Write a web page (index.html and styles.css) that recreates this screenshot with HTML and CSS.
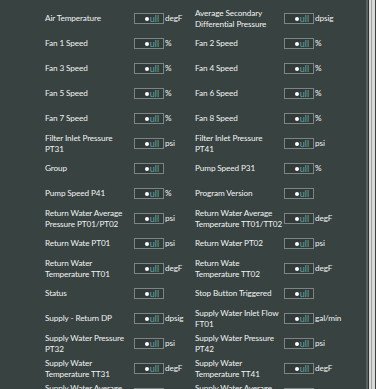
FILE: index.html
```html
<!DOCTYPE html>
<html lang="en">
<head>
    <meta charset="UTF-8">
    <meta name="viewport" content="width=device-width, initial-scale=1.0">
    <title>Tags</title>
    <link rel="stylesheet" href="styles.css">
</head>
<body>
    <div class="app">
        <div class="panel">
            <div class="grid">
                <div class="tag"><span class="label">Air Temperature</span><span class="box"><i class="dot"></i>ull</span><span class="unit">degF</span></div>
                <div class="tag"><span class="label">Average Secondary<br>Differential Pressure</span><span class="box"><i class="dot"></i>ull</span><span class="unit">dpsig</span></div>

                <div class="tag"><span class="label">Fan 1 Speed</span><span class="box"><i class="dot"></i>ull</span><span class="unit">%</span></div>
                <div class="tag"><span class="label">Fan 2 Speed</span><span class="box"><i class="dot"></i>ull</span><span class="unit">%</span></div>

                <div class="tag"><span class="label">Fan 3 Speed</span><span class="box"><i class="dot"></i>ull</span><span class="unit">%</span></div>
                <div class="tag"><span class="label">Fan 4 Speed</span><span class="box"><i class="dot"></i>ull</span><span class="unit">%</span></div>

                <div class="tag"><span class="label">Fan 5 Speed</span><span class="box"><i class="dot"></i>ull</span><span class="unit">%</span></div>
                <div class="tag"><span class="label">Fan 6 Speed</span><span class="box"><i class="dot"></i>ull</span><span class="unit">%</span></div>

                <div class="tag"><span class="label">Fan 7 Speed</span><span class="box"><i class="dot"></i>ull</span><span class="unit">%</span></div>
                <div class="tag"><span class="label">Fan 8 Speed</span><span class="box"><i class="dot"></i>ull</span><span class="unit">%</span></div>

                <div class="tag"><span class="label">Filter Inlet Pressure<br>PT31</span><span class="box"><i class="dot"></i>ull</span><span class="unit">psi</span></div>
                <div class="tag"><span class="label">Filter Inlet Pressure<br>PT41</span><span class="box"><i class="dot"></i>ull</span><span class="unit">psi</span></div>

                <div class="tag"><span class="label">Group</span><span class="box"><i class="dot"></i>ull</span><span class="unit"></span></div>
                <div class="tag"><span class="label">Pump Speed P31</span><span class="box"><i class="dot"></i>ull</span><span class="unit">%</span></div>

                <div class="tag"><span class="label">Pump Speed P41</span><span class="box"><i class="dot"></i>ull</span><span class="unit">%</span></div>
                <div class="tag"><span class="label">Program Version</span><span class="box"><i class="dot"></i>ull</span><span class="unit"></span></div>

                <div class="tag"><span class="label">Return Water Average<br>Pressure PT01/PT02</span><span class="box"><i class="dot"></i>ull</span><span class="unit">psi</span></div>
                <div class="tag"><span class="label">Return Water Average<br>Temperature TT01/TT02</span><span class="box"><i class="dot"></i>ull</span><span class="unit">degF</span></div>

                <div class="tag"><span class="label">Return Wate PT01</span><span class="box"><i class="dot"></i>ull</span><span class="unit">psi</span></div>
                <div class="tag"><span class="label">Return Water PT02</span><span class="box"><i class="dot"></i>ull</span><span class="unit">psi</span></div>

                <div class="tag"><span class="label">Return Water<br>Temperature TT01</span><span class="box"><i class="dot"></i>ull</span><span class="unit">degF</span></div>
                <div class="tag"><span class="label">Return Wate<br>Temperature TT02</span><span class="box"><i class="dot"></i>ull</span><span class="unit">degF</span></div>

                <div class="tag"><span class="label">Status</span><span class="box"><i class="dot"></i>ull</span><span class="unit"></span></div>
                <div class="tag"><span class="label">Stop Button Triggered</span><span class="box"><i class="dot"></i>ull</span><span class="unit"></span></div>

                <div class="tag"><span class="label">Supply - Return DP</span><span class="box"><i class="dot"></i>ull</span><span class="unit">dpsig</span></div>
                <div class="tag"><span class="label">Supply Water Inlet Flow<br>FT01</span><span class="box"><i class="dot"></i>ull</span><span class="unit">gal/min</span></div>

                <div class="tag"><span class="label">Supply Water Pressure<br>PT32</span><span class="box"><i class="dot"></i>ull</span><span class="unit">psi</span></div>
                <div class="tag"><span class="label">Supply Water Pressure<br>PT42</span><span class="box"><i class="dot"></i>ull</span><span class="unit">psi</span></div>

                <div class="tag"><span class="label">Supply Water<br>Temperature TT31</span><span class="box"><i class="dot"></i>ull</span><span class="unit">degF</span></div>
                <div class="tag"><span class="label">Supply Water<br>Temperature TT41</span><span class="box"><i class="dot"></i>ull</span><span class="unit">degF</span></div>

                <div class="tag"><span class="label">Supply Water Average<br>Pressure PT32/PT42</span><span class="box"><i class="dot"></i>ull</span><span class="unit">psi</span></div>
                <div class="tag"><span class="label">Supply Water Average<br>Temperature TT31/TT41</span><span class="box"><i class="dot"></i>ull</span><span class="unit">degF</span></div>
            </div>
        </div>
        <div class="scrollbar"></div>
    </div>
</body>
</html>
```

FILE: styles.css
```css
body {
    margin: 0;
    padding: 0;
    background-color: #374241;
    font-family: Lato, "Open Sans", Arial, sans-serif;
    color: #f2f2f2;
    overflow: hidden;
}
.app {
    display: flex;
    height: 389px;
}
.panel {
    width: 368px;
    border-right: 2px solid #59625f;
    box-sizing: border-box;
    overflow: hidden;
}
.scrollbar {
    width: 6px;
    border-left: 1px solid #2b3332;
    background: linear-gradient(to right, #d8d8d8 0, #d8d8d8 2px, #a2a2a2 2px, #a2a2a2 3px, #d8d8d8 3px);
}
.grid {
    display: grid;
    grid-template-columns: 150px 150px;
    grid-auto-rows: 25px;
    padding: 6px 0 0 45px;
}
.tag {
    display: flex;
    align-items: center;
    font-size: 8.2px;
    letter-spacing: -0.1px;
    line-height: 10.5px;
}
.label {
    width: 89px;
    flex-shrink: 0;
    white-space: nowrap;
}
.box {
    width: 30px;
    height: 11px;
    flex-shrink: 0;
    box-sizing: border-box;
    border: 1px solid #7c8583;
    background-color: #323b3a;
    display: flex;
    align-items: center;
    justify-content: flex-end;
    padding-right: 4px;
    color: #5fa8a0;
    font-size: 9px;
    letter-spacing: 0;
    line-height: 9px;
}
.dot {
    width: 4px;
    height: 4px;
    border-radius: 50%;
    background-color: #ffffff;
    margin-right: 1px;
}
.unit {
    margin-left: 1px;
}
```
